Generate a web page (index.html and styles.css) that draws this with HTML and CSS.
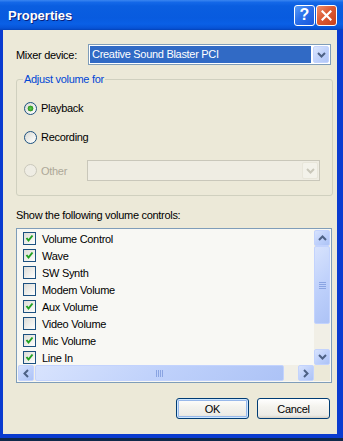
FILE: index.html
```html
<!DOCTYPE html>
<html lang="en">

<head>
    <meta charset="UTF-8">
    <meta name="viewport" content="width=device-width, initial-scale=1.0">
    <title>Properties</title>
    <link rel="stylesheet" href="styles.css">
</head>

<body>
    <div class="window">
        <div class="titlebar">
            <span class="title">Properties</span>
            <div class="title-buttons">
                <button class="tb tb-help">?</button>
                <button class="tb tb-close">
                    <svg width="11" height="11" viewBox="0 0 11 11"><path d="M1.5 1.5 L9.5 9.5 M9.5 1.5 L1.5 9.5" stroke="#fff" stroke-width="2.2" stroke-linecap="square"/></svg>
                </button>
            </div>
        </div>

        <div class="client">
            <div class="mixer-row">
                <span class="mixer-label">Mixer device:</span>
                <div class="combo">
                    <div class="combo-value">Creative Sound Blaster PCI</div>
                    <div class="combo-arrow">
                        <svg width="9" height="6" viewBox="0 0 9 6"><path d="M1 1 L4.5 4.5 L8 1" fill="none" stroke="#4d6185" stroke-width="2"/></svg>
                    </div>
                </div>
            </div>

            <fieldset class="group">
                <legend>Adjust volume for</legend>
                <div class="option first"><span class="radio checked"></span>Playback</div>
                <div class="option"><span class="radio"></span>Recording</div>
                <div class="option other disabled">
                    <span class="radio"></span>
                    <span class="other-label">Other</span>
                    <div class="combo combo-disabled">
                        <div class="combo-value"></div>
                        <div class="combo-arrow">
                            <svg width="9" height="6" viewBox="0 0 9 6"><path d="M1 1 L4.5 4.5 L8 1" fill="none" stroke="#c9c7ba" stroke-width="2"/></svg>
                        </div>
                    </div>
                </div>
            </fieldset>

            <div class="list-caption">Show the following volume controls:</div>

            <div class="listbox">
                <div class="list-items">
                    <div class="item"><span class="check on"></span>Volume Control</div>
                    <div class="item"><span class="check on"></span>Wave</div>
                    <div class="item"><span class="check"></span>SW Synth</div>
                    <div class="item"><span class="check"></span>Modem Volume</div>
                    <div class="item"><span class="check on"></span>Aux Volume</div>
                    <div class="item"><span class="check"></span>Video Volume</div>
                    <div class="item"><span class="check on"></span>Mic Volume</div>
                    <div class="item"><span class="check on"></span>Line In</div>
                </div>
                <div class="vscroll">
                    <div class="sb-btn">
                        <svg width="9" height="6" viewBox="0 0 9 6"><path d="M1 5 L4.5 1.5 L8 5" fill="none" stroke="#4d6185" stroke-width="2"/></svg>
                    </div>
                    <div class="sb-thumb vthumb"><span class="grip"></span></div>
                    <div class="sb-track"></div>
                    <div class="sb-btn">
                        <svg width="9" height="6" viewBox="0 0 9 6"><path d="M1 1 L4.5 4.5 L8 1" fill="none" stroke="#4d6185" stroke-width="2"/></svg>
                    </div>
                </div>
                <div class="hscroll">
                    <div class="sb-btn">
                        <svg width="6" height="9" viewBox="0 0 6 9"><path d="M5 1 L1.5 4.5 L5 8" fill="none" stroke="#4d6185" stroke-width="2"/></svg>
                    </div>
                    <div class="sb-thumb hthumb"><span class="grip"></span></div>
                    <div class="sb-track"></div>
                    <div class="sb-btn">
                        <svg width="6" height="9" viewBox="0 0 6 9"><path d="M1 1 L4.5 4.5 L1 8" fill="none" stroke="#4d6185" stroke-width="2"/></svg>
                    </div>
                </div>
                <div class="corner"></div>
            </div>

            <div class="actions">
                <button class="btn default">OK</button>
                <button class="btn">Cancel</button>
            </div>
        </div>
    </div>
</body>

</html>
```

FILE: styles.css
```css
* {
    box-sizing: border-box;
}

body {
    margin: 0;
    padding: 0;
    background-color: #10294a;
    font-family: "Liberation Sans", Arial, sans-serif;
    font-size: 11px;
    letter-spacing: -0.3px;
    color: #000;
}

button {
    font-family: inherit;
    font-size: inherit;
    letter-spacing: inherit;
    color: inherit;
    padding: 0;
    margin: 0;
}

/* window frame */
.window {
    width: 343px;
    height: 438px;
    display: flex;
    flex-direction: column;
    background-color: #0a3bd0;
}

.titlebar {
    height: 30px;
    flex: none;
    display: flex;
    align-items: center;
    justify-content: space-between;
    padding: 0 6px 0 8px;
    background: linear-gradient(to bottom, #3a86f0 0%, #1468e8 8%, #0a5ee0 20%, #085bdf 60%, #0a60e6 80%, #0753d6 94%, #0442b8 100%);
}

.title {
    color: #fff;
    font-weight: bold;
    font-size: 13px;
    letter-spacing: 0;
    text-shadow: 1px 1px 0 #0a1f7a;
    margin-top: 1px;
}

.title-buttons {
    display: flex;
    gap: 1px;
}

.tb {
    width: 21px;
    height: 21px;
    border: 1px solid #fff;
    border-radius: 3px;
    display: flex;
    align-items: center;
    justify-content: center;
    cursor: pointer;
}

.tb-help {
    background: linear-gradient(135deg, #5a9cf6 0%, #2a6fea 45%, #1a58dc 100%);
    color: #fff;
    font-weight: bold;
    font-size: 16px;
    letter-spacing: 0;
}

.tb-close {
    background: linear-gradient(135deg, #ee8f6c 0%, #dc5a34 45%, #c8411c 100%);
}

/* client area */
.client {
    flex: 1;
    margin: 0 6px 4px 3px;
    padding: 14px 5px 14px 13px;
    background-color: #ece9d8;
    display: flex;
    flex-direction: column;
}

.mixer-row {
    display: flex;
    align-items: center;
    height: 21px;
}

.mixer-label {
    width: 72px;
}

.combo {
    flex: 1;
    margin-right: 1px;
    height: 21px;
    display: flex;
    gap: 2px;
    padding: 1px;
    border: 1px solid #7f9db9;
    background-color: #fff;
}

.combo-value {
    flex: 1;
    background-color: #316ac5;
    color: #fff;
    line-height: 17px;
    padding-left: 2px;
}

.combo-arrow {
    width: 16px;
    display: flex;
    align-items: center;
    justify-content: center;
    border: 1px solid #c3d3fd;
    border-radius: 2px;
    background: linear-gradient(135deg, #dce6fd 0%, #c1d3fb 50%, #b1c6f7 100%);
}

.combo-disabled {
    flex: none;
    width: 233px;
    border-color: #c9c7ba;
    background-color: #efede3;
}

.combo-disabled .combo-value {
    background-color: transparent;
}

.combo-disabled .combo-arrow {
    border-color: #e8e6da;
    background: #f3f2ea;
}

/* group box */
.group {
    margin: 7px 0 0;
    padding: 0 11px 14px 7px;
    border: 1px solid #d0d0bf;
    border-radius: 3px;
}

.group legend {
    padding: 0 1px;
    margin-left: -1px;
    line-height: 14px;
    color: #0046d5;
}

.option {
    display: flex;
    align-items: center;
    gap: 4px;
    height: 16px;
    margin-top: 13px;
}

.option.first {
    margin-top: 14px;
}

.option.other {
    height: 21px;
    margin-top: 15px;
    gap: 0;
}

.option.disabled {
    color: #aca899;
}

.radio {
    width: 13px;
    height: 13px;
    flex: none;
    border: 1px solid #1c5180;
    border-radius: 50%;
    background: linear-gradient(135deg, #d8d8d2 0%, #f6f6f3 70%, #fff 100%);
}

.radio.checked {
    background: radial-gradient(circle at 50% 50%, #62cc4e 0, #3aa62c 2px, #2a8c20 2.6px, transparent 3.2px),
        linear-gradient(135deg, #d8d8d2 0%, #f6f6f3 70%, #fff 100%);
}

.option.disabled .radio {
    border-color: #cac8bb;
    background: #efede4;
    margin-right: 4px;
}

.other-label {
    width: 46px;
}

/* list */
.list-caption {
    margin-top: 12px;
    line-height: 14px;
}

.listbox {
    margin-top: 6px;
    height: 155px;
    border: 1px solid #7f9db9;
    padding: 1px;
    background-color: #f8f8f4;
    display: grid;
    grid-template-columns: 1fr 16px;
    grid-template-rows: 1fr 16px;
}

.list-items {
    overflow: hidden;
}

.item {
    height: 17px;
    display: flex;
    align-items: center;
    gap: 6px;
    padding-left: 5px;
}

.check {
    width: 13px;
    height: 13px;
    flex: none;
    border: 1px solid #1c5180;
    background: linear-gradient(135deg, #dcdcd7 0%, #f4f4f1 70%, #fff 100%);
}

.check.on {
    background: url("data:image/svg+xml,%3Csvg xmlns='http://www.w3.org/2000/svg' width='11' height='11'%3E%3Cpath d='M2.5 5 L4.5 7.5 L8.5 2.5' fill='none' stroke='%2321a121' stroke-width='2'/%3E%3C/svg%3E") center / 11px 11px no-repeat,
        linear-gradient(135deg, #dcdcd7 0%, #f4f4f1 70%, #fff 100%);
}

/* scrollbars */
.vscroll,
.hscroll {
    display: flex;
    background-color: #f1efe6;
}

.vscroll {
    flex-direction: column;
}

.sb-btn,
.sb-thumb {
    display: flex;
    align-items: center;
    justify-content: center;
    border: 1px solid #c3d3fd;
    border-radius: 2px;
    background: linear-gradient(135deg, #d8e3fd 0%, #bfd1fb 50%, #adc3f6 100%);
}

.sb-btn {
    width: 16px;
    height: 16px;
    flex: none;
}

.sb-track {
    flex: 1;
}

.vthumb {
    height: 78px;
    flex: none;
}

.hthumb {
    width: 249px;
    margin-left: 1px;
    flex: none;
}

.vthumb .grip {
    width: 7px;
    height: 7px;
    background: repeating-linear-gradient(to bottom, #8aa4e2 0 1px, transparent 1px 2px);
}

.hthumb .grip {
    width: 7px;
    height: 7px;
    background: repeating-linear-gradient(to right, #8aa4e2 0 1px, transparent 1px 2px);
}

.corner {
    background-color: #ece9d8;
}

/* buttons */
.actions {
    margin-top: 15px;
    display: flex;
    justify-content: flex-end;
    gap: 8px;
    padding-right: 2px;
}

.btn {
    width: 73px;
    height: 21px;
    border: 1px solid #003c74;
    border-radius: 3px;
    background: linear-gradient(to bottom, #fff 0%, #f4f3ee 40%, #ecebe6 85%, #d6d0c5 100%);
    cursor: pointer;
}

.btn.default {
    box-shadow: inset 0 0 0 1px #cee7ff, inset 0 0 0 2px #98b8ea;
}
```
